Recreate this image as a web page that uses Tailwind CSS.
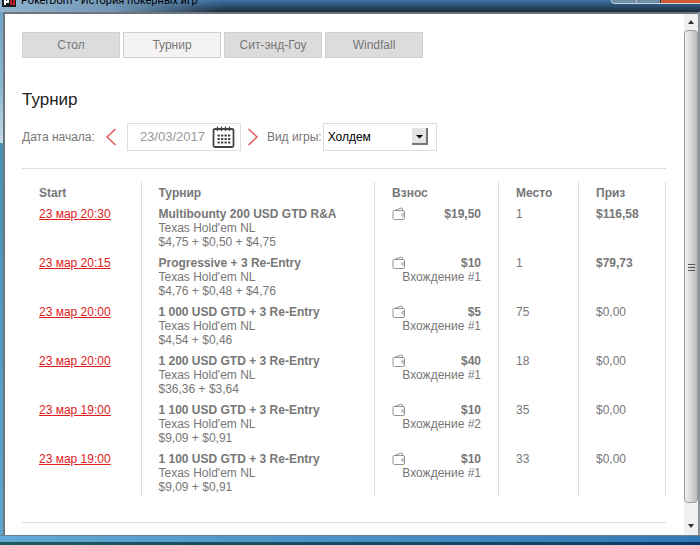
<!DOCTYPE html>
<html lang="ru">

<head>
    <title>PokerDom - История покерных игр</title>
    <meta charset="utf-8">
    <meta name="viewport" content="width=device-width, initial-scale=1">
    <script src="https://cdn.jsdelivr.net/npm/@tailwindcss/browser@4"></script>
</head>

<body class="flex flex-col h-screen overflow-hidden bg-[#1c5c94] text-xs text-[#777] font-['Liberation_Sans',sans-serif]">
    <!-- window title -->
    <header class="flex justify-between items-start h-3 shrink-0 overflow-hidden bg-linear-to-b from-[#3d74a6] to-[#1c2c3c]">
        <div class="flex items-start h-full pr-6 bg-linear-to-r from-[#8fb4cf] via-[#7298b6] to-transparent">
            <svg class="w-[14px] h-[7px] ml-[2px]" viewBox="0 0 14 7">
                <rect width="14" height="7" fill="#1a1a1a" />
                <path d="M3 0v5M3 2h3V0" stroke="#fff" stroke-width="2" fill="none" />
                <path d="M9 0v4h3V0" stroke="#b3202c" stroke-width="2" fill="none" />
            </svg>
            <h1 class="-mt-[7px] ml-[5px] text-[11px] leading-4 text-black whitespace-nowrap font-[Roboto,sans-serif]">PokerDom - История покерных игр</h1>
        </div>
        <div class="flex h-1 w-[89px] rounded-bl border-b border-l border-[#c5d2dd] overflow-hidden">
            <button class="w-6 bg-[#7390aa]" aria-label="Свернуть"></button>
            <button class="w-6 border-l border-[#b5c4d0] bg-[#7390aa]" aria-label="Развернуть"></button>
            <button class="grow border-l border-[#5d2a20] bg-[#cf5a38]" aria-label="Закрыть"></button>
        </div>
    </header>

    <div class="flex grow min-h-0">
        <div class="w-[3px] shrink-0 bg-[linear-gradient(#6fa3c4,#8db9d2_15%,#c3dbe4_25%,#4a90b4_25%,#5ea5d0)]"></div>
        <div class="flex grow min-w-0 border-2 border-b-0 border-r-0 border-[#6c757e] bg-white">
            <main class="grow min-w-0 pl-[17px] pr-[18px] pt-[18px]">
                <nav class="flex gap-[3px]">
                    <button class="w-[98px] h-[26px] border border-[#d0d0d0] bg-[#dcdcdc]">Стол</button>
                    <button class="w-[98px] h-[26px] border border-[#d0d0d0] bg-[#f4f2f2]">Турнир</button>
                    <button class="w-[98px] h-[26px] border border-[#d0d0d0] bg-[#dcdcdc]">Сит-энд-Гоу</button>
                    <button class="w-[98px] h-[26px] border border-[#d0d0d0] bg-[#dcdcdc]">Windfall</button>
                </nav>

                <h2 class="mt-8 text-[17px] leading-5 text-[#222]">Турнир</h2>

                <form class="flex items-center h-7 mt-[13px]">
                    <label for="start_date" class="whitespace-nowrap">Дата начала:</label>
                    <button type="button" class="mx-[10px]" aria-label="Предыдущий день">
                        <svg class="w-3 h-[18px]" viewBox="0 0 12 18" fill="none" stroke="#e05a5e" stroke-width="1.5">
                            <path d="M10.500 1L2 9l8.500 8" />
                        </svg>
                    </button>
                    <div class="flex items-center w-[114px] h-7 border border-[#ddd]">
                        <input id="start_date" type="text" value="23/03/2017" class="w-[84px] pl-3 text-[13px] text-[#999] outline-none">
                        <svg class="w-[23px] h-[22px]" viewBox="0 0 23 22" fill="none" stroke="#444">
                            <rect x="1.500" y="3" width="20" height="18" rx="1.500" stroke-width="1.800" />
                            <path d="M5.500 .5v4.500M9.500 .5v4.500M13.500 .5v4.500M17.500 .5v4.500" stroke-width="1.300" />
                            <path d="M5.500 9.500h13M5.500 13h13M5.500 16.500h13" stroke-width="2" stroke-dasharray="2.300 1.200" />
                        </svg>
                    </div>
                    <button type="button" class="ml-[6px] mr-2" aria-label="Следующий день">
                        <svg class="w-3 h-[18px]" viewBox="0 0 12 18" fill="none" stroke="#e05a5e" stroke-width="1.5">
                            <path d="M1.500 1l8.500 8-8.500 8" />
                        </svg>
                    </button>
                    <label for="game_type" class="whitespace-nowrap">Вид игры:</label>
                    <div class="relative w-[114px] h-7 ml-px">
                        <select id="game_type" class="appearance-none w-full h-full pl-1 border border-[#ddd] bg-white text-black">
                            <option>Холдем</option>
                        </select>
                        <svg class="absolute top-[5px] right-[9px] w-4 h-[17px] pointer-events-none" viewBox="0 0 16 17">
                            <rect width="16" height="17" fill="#777" />
                            <rect width="14" height="15" fill="#e4e4e4" />
                            <path d="M4 7h7l-3.500 3.500z" fill="#000" />
                        </svg>
                    </div>
                </form>

                <div class="mt-[17px] pt-[13px] pb-[26px] border-y border-[#ddd]">
                    <table class="w-full table-fixed leading-[14px] text-left">
                        <thead>
                            <tr>
                                <th class="w-[119px] pt-1 pl-[17px] border-r border-[#ddd]">Start</th>
                                <th class="pt-1 pl-[17px] border-r border-[#ddd]">Турнир</th>
                                <th class="w-[124px] pt-1 pl-[17px] border-r border-[#ddd]">Взнос</th>
                                <th class="w-20 pt-1 pl-[17px] border-r border-[#ddd]">Место</th>
                                <th class="w-[87px] pt-1 pl-[17px] border-r border-[#ddd]">Приз</th>
                            </tr>
                        </thead>
                        <tbody id="history_body">
                            <!-- rows are generated below -->
                        </tbody>
                        <tfoot>
                            <tr class="h-[2px]">
                                <td class="border-r border-[#ddd]"></td>
                                <td class="border-r border-[#ddd]"></td>
                                <td class="border-r border-[#ddd]"></td>
                                <td class="border-r border-[#ddd]"></td>
                                <td class="border-r border-[#ddd]"></td>
                            </tr>
                        </tfoot>
                    </table>
                </div>
            </main>

            <!-- scroll bar -->
            <div class="flex flex-col w-[14px] shrink-0 bg-[#f0f0f0]">
                <svg class="w-[14px] h-4 shrink-0" viewBox="0 0 14 16">
                    <path d="M4 10h6L7 6z" fill="#333" />
                </svg>
                <div class="flex items-center justify-center grow border border-[#999] rounded-sm bg-linear-to-r from-[#f3f3f3] to-[#bcbcc0]">
                    <svg class="w-[7px] h-2" viewBox="0 0 7 8" stroke="#555">
                        <path d="M0 1.500h7M0 4.500h7M0 7.500h7" />
                    </svg>
                </div>
                <svg class="w-[14px] h-8 shrink-0" viewBox="0 0 14 32">
                    <path d="M4 21h6l-3 4z" fill="#333" />
                </svg>
            </div>
        </div>
        <div class="w-[2px] shrink-0 bg-[#8a949c]"></div>
    </div>

    <footer class="h-[10px] shrink-0 border-t border-[#6c8090] bg-linear-to-r from-[#62a9d6] to-[#2f78b4]">
        <div class="h-[3px] mt-[6px] bg-linear-to-r from-[#1d5a5c] to-[#0b3a68]"></div>
    </footer>

    <script type="text/javascript">
        var games = [
            { start: "23 мар 20:30", name: "Multibounty 200 USD GTD R&amp;A", cost: "$4,75 + $0,50 + $4,75", fee: "$19,50", entry: "", place: 1, prize: "$116,58" },
            { start: "23 мар 20:15", name: "Progressive + 3 Re-Entry", cost: "$4,76 + $0,48 + $4,76", fee: "$10", entry: "Вхождение #1", place: 1, prize: "$79,73" },
            { start: "23 мар 20:00", name: "1 000 USD GTD + 3 Re-Entry", cost: "$4,54 + $0,46", fee: "$5", entry: "Вхождение #1", place: 75, prize: "$0,00" },
            { start: "23 мар 20:00", name: "1 200 USD GTD + 3 Re-Entry", cost: "$36,36 + $3,64", fee: "$40", entry: "Вхождение #1", place: 18, prize: "$0,00" },
            { start: "23 мар 19:00", name: "1 100 USD GTD + 3 Re-Entry", cost: "$9,09 + $0,91", fee: "$10", entry: "Вхождение #2", place: 35, prize: "$0,00" },
            { start: "23 мар 19:00", name: "1 100 USD GTD + 3 Re-Entry", cost: "$9,09 + $0,91", fee: "$10", entry: "Вхождение #1", place: 33, prize: "$0,00" }
        ];

        var html = "";
        games.forEach(function (game) {
            var prize_class = game.prize === "$0,00" ? "" : "font-bold";
            html += `
            <tr class="align-top">
                <td class="pt-[7px] pl-[17px] border-r border-[#ddd]"><a href="#" class="text-[#e02020] underline">${game.start}</a></td>
                <td class="pt-[7px] pl-[17px] border-r border-[#ddd]"><b>${game.name}</b><br>Texas Hold'em NL<br>${game.cost}</td>
                <td class="pt-[7px] px-[17px] border-r border-[#ddd] text-right">
                    <div class="flex justify-between">
                        <svg class="w-[14px] h-[14px]" viewBox="0 0 14 14" fill="none" stroke="#888" stroke-width=".9">
                            <path d="M2.500 3.500h8.500a1.500 1.500 0 011.500 1.500v6a1.500 1.500 0 01-1.500 1.500H2.500A1.500 1.500 0 011 11V5a1.500 1.500 0 011.500-1.500L9 1l1.500 .7v1.800M12.500 6.800h-1.700a1 1 0 000 2.200h1.700" />
                        </svg>
                        <b>${game.fee}</b>
                    </div>
                    ${game.entry}
                </td>
                <td class="pt-[7px] pl-[17px] border-r border-[#ddd]">${game.place}</td>
                <td class="pt-[7px] pl-[17px] border-r border-[#ddd] ${prize_class}">${game.prize}</td>
            </tr>`;
        });
        document.getElementById("history_body").innerHTML = html;
    </script>
</body>

</html>
